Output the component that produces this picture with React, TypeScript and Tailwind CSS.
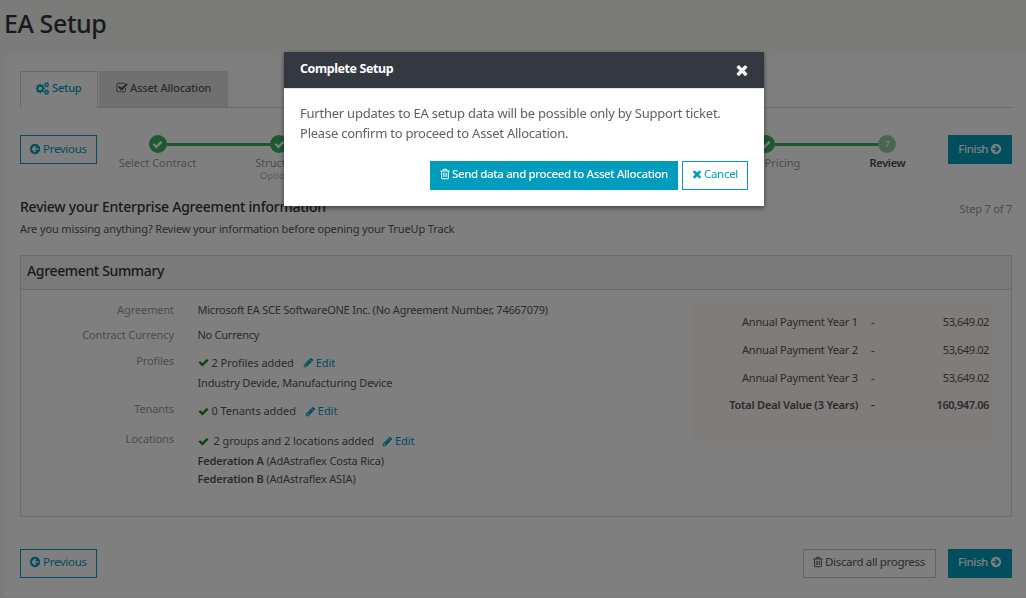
import React from "react";

const GLYPHS = {
  check:
    "M1671 566q0 40-28 68l-724 724-136 136q-28 28-68 28t-68-28l-136-136-362-362q-28-28-28-68t28-68l136-136q28-28 68-28t68 28l294 295 656-657q28-28 68-28t68 28l136 136q28 28 28 68z",
  times:
    "M1490 1322q0 40-28 68l-136 136q-28 28-68 28t-68-28l-294-294-294 294q-28 28-68 28t-68-28l-136-136q-28-28-28-68t28-68l294-294-294-294q-28-28-28-68t28-68l136-136q28-28 68-28t68 28l294 294 294-294q28-28 68-28t68 28l136 136q28 28 28 68t-28 68l-294 294 294 294q28 28 28 68z",
  trash:
    "M704 736v576q0 14-9 23t-23 9h-64q-14 0-23-9t-9-23v-576q0-14 9-23t23-9h64q14 0 23 9t9 23zm256 0v576q0 14-9 23t-23 9h-64q-14 0-23-9t-9-23v-576q0-14 9-23t23-9h64q14 0 23 9t9 23zm256 0v576q0 14-9 23t-23 9h-64q-14 0-23-9t-9-23v-576q0-14 9-23t23-9h64q14 0 23 9t9 23zm128 724v-948h-896v948q0 22 7 40.5t14.5 27 10.5 8.5h832q3 0 10.5-8.5t14.5-27 7-40.5zm-672-1076h448l-48-117q-7-9-17-11h-317q-10 2-17 11zm928 32v64q0 14-9 23t-23 9h-96v948q0 83-47 143.5t-113 60.5h-832q-66 0-113-58.5t-47-141.5v-952h-96q-14 0-23-9t-9-23v-64q0-14 9-23t23-9h309l70-167q15-37 54-63t79-26h320q40 0 79 26t54 63l70 167h309q14 0 23 9t9 23z",
  arrow:
    "M1408 960v-128q0-26-19-45t-45-19h-502l189-189q19-19 19-45t-19-45l-91-91q-18-18-45-18t-45 18l-362 362-91 91q-18 18-18 45t18 45l91 91 362 362q18 18 45 18t45-18l91-91q18-18 18-45t-18-45l-189-189h502q26 0 45-19t19-45zm256-64q0 209-103 385.5t-279.5 279.5-385.5 103-385.5-103-279.5-279.5-103-385.5 103-385.5 279.5-279.5 385.5-103 385.5 103 279.5 279.5 103 385.5z",
  pencil:
    "M491 1536l91-91-235-235-91 91v107h128v128h107zm523-928q0-22-22-22-10 0-17 7l-542 542q-7 7-7 17 0 22 22 22 10 0 17-7l542-542q7-7 7-17zm-54-192l416 416-832 832h-416v-416zm683 96q0 53-37 90l-166 166-416-416 166-165q36-38 90-38 53 0 91 38l235 234q37 39 37 91z",
  checkSquare:
    "M1472 930v318q0 119-84.5 203.5t-203.5 84.5h-832q-119 0-203.5-84.5t-84.5-203.5v-832q0-119 84.5-203.5t203.5-84.5h832q63 0 117 25 15 7 18 23 3 17-9 29l-49 49q-10 10-23 10-3 0-9-2-23-6-45-6h-832q-66 0-113 47t-47 113v832q0 66 47 113t113 47h832q66 0 113-47t47-113v-254q0-13 9-22l64-64q10-10 23-10 6 0 12 3 20 8 20 29zm231-489l-814 814q-24 24-57 24t-57-24l-430-430q-24-24-24-57t24-57l110-110q24-24 57-24t57 24l263 263 647-647q24-24 57-24t57 24l110 110q24 24 24 57t-24 57z",
  cogs:
    "M832 896q0-106-75-181t-181-75-181 75-75 181 75 181 181 75 181-75 75-181zm768 512q0-52-38-90t-90-38-90 38-38 90q0 53 37.5 90.5t90.5 37.5 90.5-37.5 37.5-90.5zm0-1024q0-52-38-90t-90-38-90 38-38 90q0 53 37.5 90.5t90.5 37.5 90.5-37.5 37.5-90.5zm-384 421v185q0 10-7 19.5t-16 10.5l-155 24q-11 35-32 76 34 48 90 115 7 11 7 20 0 12-7 19-23 30-82.5 89.5t-78.5 59.5q-11 0-21-7l-115-90q-37 19-77 31-11 108-23 155-7 24-30 24h-186q-11 0-20-7.5t-10-17.5l-23-153q-34-10-75-31l-118 89q-7 7-20 7-11 0-21-8-144-133-144-160 0-9 7-19 10-14 41-53t47-61q-23-44-35-82l-152-24q-10-1-17-9.5t-7-19.5v-185q0-10 7-19.5t16-10.5l155-24q11-35 32-76-34-48-90-115-7-11-7-20 0-12 7-20 22-30 82-89t79-59q11 0 21 7l115 90q34-18 77-32 11-108 23-154 7-24 30-24h186q11 0 20 7.5t10 17.5l23 153q34 10 75 31l118-89q8-7 20-7 11 0 21 8 144 133 144 160 0 8-7 19-12 16-42 54t-45 60q23 48 34 82l152 23q10 2 17 10.5t7 19.5zm640 533v140q0 16-149 31-12 27-30 52 51 113 51 138 0 4-4 7-122 71-124 71-8 0-46-47t-52-68q-20 2-30 2t-30-2q-14 21-52 68t-46 47q-2 0-124-71-4-3-4-7 0-25 51-138-18-25-30-52-149-15-149-31v-140q0-16 149-31 13-29 30-52-51-113-51-138 0-4 4-7 4-2 35-20t59-34 30-16q8 0 46 46.5t52 67.5q20-2 30-2t30 2q51-71 92-112l6-2q4 0 124 70 4 3 4 7 0 25-51 138 17 23 30 52 149 15 149 31zm0-1024v140q0 16-149 31-12 27-30 52 51 113 51 138 0 4-4 7-122 71-124 71-8 0-46-47t-52-68q-20 2-30 2t-30-2q-14 21-52 68t-46 47q-2 0-124-71-4-3-4-7 0-25 51-138-18-25-30-52-149-15-149-31v-140q0-16 149-31 13-29 30-52-51-113-51-138 0-4 4-7 4-2 35-20t59-34 30-16q8 0 46 46.5t52 67.5q20-2 30-2t30 2q51-71 92-112l6-2q4 0 124 70 4 3 4 7 0 25-51 138 17 23 30 52 149 15 149 31z",
};

type IconProps = { name: keyof typeof GLYPHS; className?: string };

function Icon({ name, className = "" }: IconProps) {
  return (
    <svg viewBox="0 0 1792 1792" fill="currentColor" className={`shrink-0 ${className}`} aria-hidden="true">
      <path d={GLYPHS[name]} />
    </svg>
  );
}

function PreviousButton({ className }: { className: string }) {
  return (
    <button
      className={`flex h-[29px] w-[77px] items-center border border-[#009cbd] pl-[8px] text-[11.5px] tracking-[-0.3px] text-[#009cbd] ${className}`}
    >
      <Icon name="arrow" className="mr-[2px] size-[12px]" />
      Previous
    </button>
  );
}

function FinishButton({ className }: { className: string }) {
  return (
    <button
      className={`flex h-[29px] w-[64px] items-center bg-[#009cbd] pl-[10px] text-[11.5px] font-medium tracking-[-0.4px] text-white ${className}`}
    >
      Finish
      <Icon name="arrow" className="ml-[2px] size-[12px] -scale-x-100" />
    </button>
  );
}

type Step = { label?: string; note?: string; current?: boolean };

const STEPS: Step[] = [
  { label: "Select Contract" },
  { label: "Structure", note: "Optional" },
  {},
  {},
  {},
  { label: "Select Pricing" },
  { label: "Review", current: true },
];

function Stepper() {
  return (
    <ol className="flex w-[851.6px]">
      {STEPS.map((step, i) => (
        <li key={i} className="flex w-[121.66px] flex-col items-center">
          <div className="flex h-[18px] w-full items-center">
            <span className={i === 0 ? "h-[3px] flex-1" : "h-[3px] flex-1 bg-[#39b162]"} />
            {step.current ? (
              <span className="flex size-[18px] items-center justify-center rounded-full bg-[#93cba8] pb-px text-[9px] font-semibold text-white">
                {i + 1}
              </span>
            ) : (
              <span className="flex size-[18px] items-center justify-center rounded-full bg-[#39b162] text-white">
                <Icon name="check" className="size-[11px]" />
              </span>
            )}
            <span className={step.current ? "h-[3px] flex-1" : "h-[3px] flex-1 bg-[#39b162]"} />
          </div>
          <span
            className={
              step.current
                ? "mt-[3px] text-[11px] leading-[14px] font-semibold tracking-[-0.3px] text-[#4a4a55]"
                : "mt-[3px] text-[11px] leading-[14px] text-[#98989e]"
            }
          >
            {step.label}
          </span>
          {step.note && <span className="text-[9.5px] leading-[12px] text-[#b5b5ba]">{step.note}</span>}
        </li>
      ))}
    </ol>
  );
}

function EditLink({ className = "" }: { className?: string }) {
  return (
    <a className={`flex items-center text-[#009cbd] ${className}`}>
      <Icon name="pencil" className="mr-[2px] size-[11px]" />
      Edit
    </a>
  );
}

function Added({ children }: { children: React.ReactNode }) {
  return (
    <div className="flex h-[20px] items-center tracking-[-0.06px]">
      <Icon name="check" className="mr-[3px] size-[11px] text-[#0a8a2a]" />
      {children}
    </div>
  );
}

function SummaryLabel({ children }: { children: React.ReactNode }) {
  return <dt className="w-[153px] text-right leading-[20px] tracking-[-0.1px] text-[#98989e]">{children}</dt>;
}

const PAYMENTS = [
  { label: "Annual Payment Year 1", amount: "53,649.02" },
  { label: "Annual Payment Year 2", amount: "53,649.02" },
  { label: "Annual Payment Year 3", amount: "53,649.02" },
];

function AgreementSummary() {
  return (
    <section className="h-[262px] border border-[#d9d9d9] text-[11px] tracking-[-0.17px] text-[#55555f]">
      <h3 className="flex h-[34px] items-center border-b border-[#d0d0d0] bg-[#f4f4f4] pb-[3px] pl-[6px] text-[14px] font-medium tracking-[-0.35px] text-[#30343c]">
        Agreement Summary
      </h3>
      <div className="flex justify-between pr-[12px]">
        <dl className="flex flex-col pt-[10px] whitespace-nowrap">
          <div className="flex h-[25px] gap-[23.5px]">
            <SummaryLabel>Agreement</SummaryLabel>
            <dd className="leading-[20px] tracking-[-0.23px]">
              Microsoft EA SCE SoftwareONE Inc. (No Agreement Number, 74667079)
            </dd>
          </div>
          <div className="flex h-[26px] gap-[23.5px]">
            <SummaryLabel>Contract Currency</SummaryLabel>
            <dd className="leading-[20px] tracking-[-0.25px]">No Currency</dd>
          </div>
          <div className="flex h-[48px] gap-[23.5px]">
            <SummaryLabel>Profiles</SummaryLabel>
            <dd className="pt-[2px] leading-[20px]">
              <Added>
                2 Profiles added <EditLink className="ml-[9px]" />
              </Added>
              Industry Devide, Manufacturing Device
            </dd>
          </div>
          <div className="flex h-[30px] gap-[23.5px]">
            <SummaryLabel>Tenants</SummaryLabel>
            <dd className="pt-[3px]">
              <Added>
                0 Tenants added <EditLink className="ml-[9px]" />
              </Added>
            </dd>
          </div>
          <div className="flex gap-[23.5px]">
            <SummaryLabel>Locations</SummaryLabel>
            <dd className="pt-[3px]">
              <Added>
                <span className="ml-[2px]">2 groups and 2 locations added</span> <EditLink className="ml-[8px]" />
              </Added>
              <div className="leading-[18px]">
                <b className="font-semibold">Federation A</b> (AdAstraflex Costa Rica)
              </div>
              <div className="leading-[18px]">
                <b className="font-semibold">Federation B</b> (AdAstraflex ASIA)
              </div>
            </dd>
          </div>
        </dl>
        <div className="mt-[12px] h-[140px] w-[306px] rounded-[2px] bg-[#fff8f2] pt-[7px] pr-[10px] whitespace-nowrap">
          {PAYMENTS.map((p) => (
            <div key={p.label} className="flex h-[28px] items-center">
              <span className="w-[165px] text-right">{p.label}</span>
              <span className="w-[30px] pl-[13px]">-</span>
              <span className="flex-1 text-right tracking-[-0.42px]">{p.amount}</span>
            </div>
          ))}
          <div className="flex h-[25px] items-center font-semibold">
            <span className="w-[165px] text-right tracking-[-0.2px]">Total Deal Value (3 Years)</span>
            <span className="w-[30px] pl-[13px]">-</span>
            <span className="flex-1 text-right tracking-[-0.4px]">160,947.06</span>
          </div>
        </div>
      </div>
    </section>
  );
}

function ConfirmDialog() {
  return (
    <div className="fixed inset-0 flex items-start justify-center bg-black/50 pt-[52px] pl-[22px]">
      <div role="dialog" className="w-[480px] bg-white shadow-[0_2px_5px_rgba(0,0,0,0.5)]">
        <header className="flex h-[36px] items-center justify-between bg-[#343840] pr-[14px] pb-[2px] pl-[16px] text-white">
          <h2 className="text-[12.5px] font-bold tracking-[-0.42px] whitespace-nowrap">Complete Setup</h2>
          <Icon name="times" className="mt-px size-[16px]" />
        </header>
        <div className="h-[118px] border-t border-[#e5e5e5] px-[16px] pt-[14px]">
          <p className="text-[13px] leading-[20px] tracking-[-0.23px] whitespace-nowrap text-[#5f6069]">
            Further updates to EA setup data will be possible only by Support ticket.
            <br />
            Please confirm to proceed to Asset Allocation.
          </p>
          <div className="mt-[18px] flex justify-end gap-[4px] whitespace-nowrap">
            <button className="flex h-[29px] w-[248px] items-center bg-[#009cbd] pb-[3px] pl-[9px] text-[11.5px] font-medium tracking-[-0.38px] text-white">
              <Icon name="trash" className="mr-[1px] size-[12px]" />
              Send data and proceed to Asset Allocation
            </button>
            <button className="flex h-[29px] w-[66px] items-center border border-[#009cbd] pb-[3px] pl-[8px] text-[11.5px] tracking-[-0.3px] text-[#009cbd]">
              <Icon name="times" className="mr-[1px] size-[12px]" />
              Cancel
            </button>
          </div>
        </div>
      </div>
    </div>
  );
}

export default function App() {
  return (
    <div className="h-[598px] overflow-hidden bg-[#f7f7f2] pl-[4px] font-['Noto_Sans',sans-serif] text-[#55555f]">
      <h1 className="h-[55px] pt-[5px] text-[25px] leading-[36px] font-medium tracking-[-0.4px] text-[#2f343c]">
        EA Setup
      </h1>
      <main className="h-[542px] bg-white pt-[16px] pr-[14px] pl-[16px]">
        <nav className="flex h-[37px] text-[11px] font-medium tracking-[-0.15px] whitespace-nowrap">
          <div className="flex w-[78px] items-center border border-b-0 border-[#d5d5d5] pb-[4px] pl-[15px] text-[#009cbd]">
            <Icon name="cogs" className="mr-[3px] size-[13px]" />
            Setup
          </div>
          <div className="w-px border-b border-[#d5d5d5]" />
          <div className="flex w-[129px] items-center border-b border-[#d0d0d0] bg-[#e0e0e0] pb-[2px] pl-[17px]">
            <Icon name="checkSquare" className="mr-[2px] size-[12px]" />
            Asset Allocation
          </div>
          <div className="flex-1 border-b border-[#d5d5d5]" />
        </nav>
        <div className="mt-[27px] flex h-[61px] items-start">
          <PreviousButton className="pb-px" />
          <Stepper />
          <FinishButton className="pb-px" />
        </div>
        <div className="flex items-center justify-between">
          <h2 className="text-[14px] leading-[20px] font-medium tracking-[-0.23px] whitespace-nowrap text-[#2f343c]">
            Review your Enterprise Agreement information
          </h2>
          <span className="mt-[5px] text-[11px] tracking-[-0.2px] text-[#98989e]">Step 7 of 7</span>
        </div>
        <p className="mt-[2px] mb-[17px] text-[11px] leading-[18px] tracking-[-0.13px]">
          Are you missing anything? Review your information before opening your TrueUp Track
        </p>
        <AgreementSummary />
        <footer className="mt-[32px] flex items-start whitespace-nowrap">
          <PreviousButton className="pb-[2px]" />
          <button className="ml-auto flex h-[29px] w-[133px] items-center border border-[#c9c9c9] pb-[2px] pl-[8px] text-[11.5px] tracking-[-0.33px]">
            <Icon name="trash" className="mr-[1px] size-[12px]" />
            Discard all progress
          </button>
          <div className="ml-[12px]">
            <FinishButton className="pb-[2px]" />
          </div>
        </footer>
      </main>
      <ConfirmDialog />
    </div>
  );
}
